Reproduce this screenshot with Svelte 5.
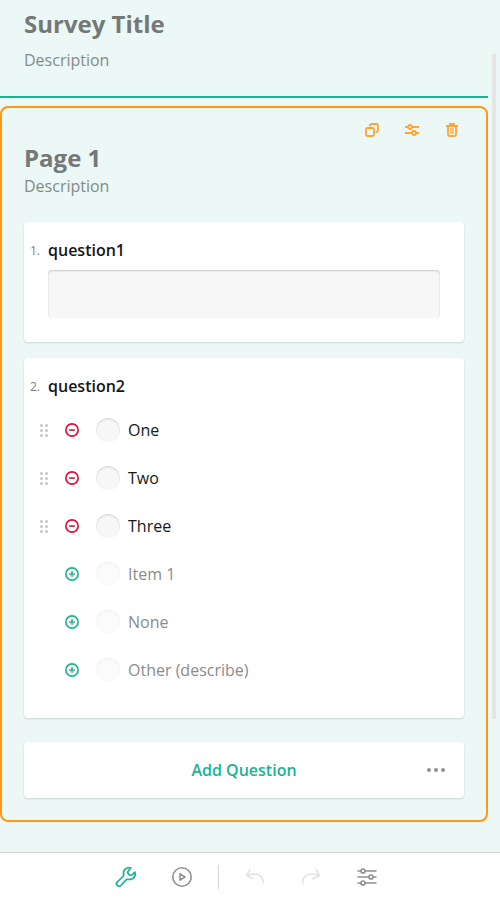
<script>
  const items = [
    { text: 'One', added: true },
    { text: 'Two', added: true },
    { text: 'Three', added: true },
    { text: 'Item 1', added: false },
    { text: 'None', added: false },
    { text: 'Other (describe)', added: false }
  ];
</script>

<div class="creator">
  <main class="surface">
    <header class="survey-head">
      <h1>Survey Title</h1>
      <p>Description</p>
    </header>

    <section class="page">
      <div class="page-actions">
        <svg width="16" height="16" viewBox="0 0 16 16" fill="none" stroke="currentColor" stroke-width="1.800">
          <rect x="2" y="6" width="8" height="8" rx="1.5" />
          <path d="M6 4.500V3.500Q6 2 7.500 2H12.500Q14 2 14 3.500V8.500Q14 10 12.500 10H11.500" />
        </svg>
        <svg width="16" height="16" viewBox="0 0 16 16" fill="none" stroke="currentColor" stroke-width="1.8">
          <path d="M1 5H4M8 5H15M1 11H8M12 11H15" />
          <circle cx="6" cy="5" r="2" /><circle cx="10" cy="11" r="2" />
        </svg>
        <svg width="16" height="16" viewBox="0 0 16 16" fill="none" stroke="currentColor" stroke-width="1.800">
          <path d="M2 4H14M6 3.500V2H10V3.500M4 4V12.500Q4 14 5.500 14H10.500Q12 14 12 12.500V4" />
          <path d="M7 6V12M9 6V12" stroke-width="1.300" />
        </svg>
      </div>
      <h2>Page 1</h2>
      <p class="page-desc">Description</p>

      <article class="card first">
        <div class="question-title"><span class="num">1.</span><span>question1</span></div>
        <div class="text-field"></div>
      </article>

      <article class="card second">
        <div class="question-title"><span class="num">2.</span><span>question2</span></div>
        <ul>
          {#each items as item}
            <li class:ghost={!item.added}>
              <span class="drag">
                {#if item.added}
                  <svg width="16" height="16" viewBox="0 0 16 16" fill="#c6c6c6">
                    {#each [3.5, 8.5, 13.5] as y}
                      <circle cx="5.500" cy={y} r="1.500" /><circle cx="10.500" cy={y} r="1.500" />
                    {/each}
                  </svg>
                {/if}
              </span>
              <svg class="toggle" width="16" height="16" viewBox="0 0 16 16" fill="none" stroke="currentColor">
                <circle cx="8" cy="8" r="6.150" stroke-width="1.600" />
                <path d={item.added ? 'M5.200 8H10.800' : 'M5.200 8H10.800M8 5.200V10.800'} stroke-width="1.600" />
              </svg>
              <span class="radio"></span>
              <span class="label">{item.text}</span>
            </li>
          {/each}
        </ul>
      </article>

      <div class="card add">
        <span>Add Question</span>
        <svg width="24" height="24" viewBox="0 0 24 24" fill="#909090">
          <circle cx="5" cy="12" r="2" /><circle cx="12" cy="12" r="2" /><circle cx="19" cy="12" r="2" />
        </svg>
      </div>
    </section>
    <div class="scrollbar"></div>
  </main>

  <footer>
    <svg class="active" width="24" height="24" viewBox="0 0 24 24" fill="none" stroke="currentColor" stroke-width="1.700" stroke-linejoin="round">
      <path d="M16.800 3C12.800 1.700 8.600 5 9.700 9.500C9.900 10.600 9.500 11.200 8.700 11.900L3.200 17C1.100 19.100 4.500 22.800 6.800 20.500L11.900 15.100C12.600 14.300 13.300 14.100 14.300 14.300C18.800 15.300 22.300 11.300 20.900 7.200L17.700 10.100C16.300 11.400 12.700 8 14.100 6.300Z" />
    </svg>
    <svg width="24" height="24" viewBox="0 0 24 24" fill="none" stroke="currentColor" stroke-width="1.600" stroke-linejoin="round">
      <circle cx="12" cy="12" r="9.200" /><path d="M10 8.800V15.200L15 12Z" />
    </svg>
    <span class="separator"></span>
    <svg class="disabled" width="24" height="24" viewBox="0 0 24 24" fill="none" stroke="currentColor" stroke-width="1.500">
      <path d="M7.500 4L3.500 10.500L10.500 14M3.700 10.500C11 7 21.500 9.500 20 18.500" />
    </svg>
    <svg class="disabled" width="24" height="24" viewBox="0 0 24 24" fill="none" stroke="currentColor" stroke-width="1.500">
      <path d="M16.500 4L20.500 10.500L13.500 14M20.300 10.500C13 7 2.500 9.500 4 18.500" />
    </svg>
    <svg width="24" height="24" viewBox="0 0 24 24" fill="none" stroke="currentColor" stroke-width="1.700">
      <path d="M2.500 6H6M10 6H21.500M2.500 12H14M18 12H21.500M2.500 18H6M10 18H21.500" />
      <circle cx="8" cy="6" r="2" /><circle cx="16" cy="12" r="2" /><circle cx="8" cy="18" r="2" />
    </svg>
  </footer>
</div>

<style>
  :global(body) { margin: 0; }
  .creator {
    box-sizing: border-box;
    width: 500px;
    height: 900px;
    display: flex;
    flex-direction: column;
    overflow: hidden;
    background: #ebf8f6;
    font: 16px/24px "Open Sans", sans-serif;
    color: #161616;
  }
  svg { display: block; flex: none; }
  h1, h2, p, ul { margin: 0; padding: 0; }
  h1, h2 { font-size: 24px; line-height: 32px; font-weight: 700; color: #747877; }
  p { font-weight: 400; color: #848b89; }
  .surface { position: relative; flex: 1; min-height: 0; }
  .survey-head {
    box-sizing: border-box;
    width: 488px;
    height: 98px;
    padding: 8px 24px 0;
    border-bottom: 2px solid #19b394;
  }
  .survey-head p { margin-top: 8px; }
  .page {
    box-sizing: border-box;
    width: 488px;
    height: 716px;
    margin-top: 8px;
    padding: 14px 22px 0;
    border: 2px solid #ff9814;
    border-radius: 8px;
  }
  .page-actions {
    display: flex;
    justify-content: flex-end;
    gap: 24px;
    padding-right: 4px;
    color: #ffa534;
  }
  .page h2 { margin-top: 4px; }
  .page-desc { margin-bottom: 24px; }
  .card {
    box-sizing: border-box;
    background: #fff;
    border-radius: 4px;
    box-shadow: 0 1px 2px rgba(0, 0, 0, 0.15);
  }
  .first { height: 120px; padding: 16px 24px 0 0; }
  .second { height: 360px; margin-top: 16px; padding-top: 16px; }
  .question-title { display: flex; font-weight: 600; }
  .num {
    width: 16px;
    padding-right: 8px;
    text-align: right;
    font-size: 12px;
    line-height: 26px;
    height: 24px;
    font-weight: 400;
    color: #7c7c7c;
  }
  .text-field {
    height: 48px;
    margin: 8px 0 0 24px;
    border-radius: 4px;
    background: #f7f7f7;
    box-shadow: inset 0 1px 2px rgba(0, 0, 0, 0.2);
  }
  ul { list-style: none; padding-top: 8px; }
  li { display: flex; align-items: center; height: 48px; padding-left: 12px; }
  .drag { width: 16px; margin-right: 12px; }
  .toggle { color: #e60a3e; }
  .ghost .toggle { color: #19b394; }
  .radio {
    width: 24px;
    height: 24px;
    margin: 0 8px 0 16px;
    border-radius: 50%;
    background: #f7f7f7;
    box-shadow: inset 0 1px 2px rgba(0, 0, 0, 0.15);
  }
  .ghost .radio { opacity: 0.4; }
  .ghost .label { color: #8b8b8b; }
  .add {
    display: flex;
    align-items: center;
    height: 56px;
    margin-top: 24px;
    padding-right: 16px;
  }
  .add span { flex: 1; padding-left: 40px; text-align: center; font-weight: 600; color: #19b394; }
  .scrollbar {
    position: absolute;
    top: 54px;
    left: 492px;
    width: 4px;
    height: 665px;
    background: #e5e5e5;
  }
  footer {
    box-sizing: border-box;
    height: 48px;
    display: flex;
    align-items: center;
    padding: 1px 0 0 114px;
    gap: 32px;
    border-top: 1px solid #d5d5d5;
    background: #fff;
    color: #909090;
  }
  .active { color: #19b394; }
  .disabled { color: #e2e2e2; }
  .separator { width: 1px; height: 24px; margin: 0 -8px; background: #d5d5d5; }
</style>
